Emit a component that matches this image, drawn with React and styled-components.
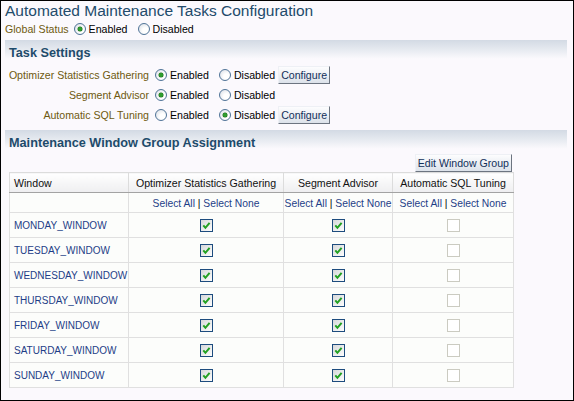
import React from "react";
import styled, { createGlobalStyle } from "styled-components";

const GlobalStyle = createGlobalStyle`
  body {
    margin: 0;
    background: #fff;
    font-family: "Liberation Sans", Arial, sans-serif;
  }
`;

const Frame = styled.div`
  width: 574px;
  height: 401px;
  box-sizing: border-box;
  border: 1px solid #000;
  background: #fbf9fd;
  padding: 0 6px 0 4px;
  font-size: 10.6px;
  color: #000;
  overflow: hidden;
`;

const Title = styled.h1`
  margin: 0;
  font-size: 15.5px;
  font-weight: normal;
  line-height: 19px;
  color: #224b6b;
`;

const StatusRow = styled.div`
  display: flex;
  align-items: center;
  height: 18px;
`;

const Label = styled.span`
  color: #6e5a10;
  white-space: nowrap;
`;

const StatusLabel = styled(Label)`
  margin-right: 5px;
`;

const Option = styled.label`
  display: inline-flex;
  align-items: center;
  gap: 3px;
  white-space: nowrap;
  &:not(:last-of-type) {
    margin-right: 10px;
  }
`;

const RadioDot = styled.span`
  position: relative;
  display: inline-block;
  width: 12px;
  height: 12px;
  box-sizing: border-box;
  border-radius: 50%;
  border: 1px solid #4f7397;
  background: radial-gradient(circle at 65% 65%, #ffffff 30%, #d5dae2 100%);
  &::after {
    content: "";
    display: ${(p) => (p.$on ? "block" : "none")};
    position: absolute;
    left: 3px;
    top: 3px;
    width: 4px;
    height: 4px;
    border-radius: 50%;
    background: #2f9f2f;
    box-shadow: 0 0 0 0.5px #1d6a1d;
  }
`;

const Band = styled.h2`
  margin: ${(p) => p.$top}px 0 0;
  height: 24px;
  box-sizing: border-box;
  padding: 2px 0 0 4px;
  line-height: 22px;
  font-size: 12.7px;
  font-weight: bold;
  color: #1e4b6b;
  background: linear-gradient(#d3dae4 0%, #e6eaf0 40%, #fbf9fd 78%);
`;

const TaskGrid = styled.div`
  display: grid;
  grid-template-columns: 144px auto;
  grid-auto-rows: 20px;
  column-gap: 6px;
  margin-top: 1px;
  align-items: center;
`;

const TaskLabel = styled(Label)`
  text-align: right;
`;

const Options = styled.div`
  display: flex;
  align-items: center;
`;

const Button = styled.button`
  height: 18px;
  margin: 0 0 0 ${(p) => p.$gap || 0}px;
  padding: 0 2px;
  font-family: inherit;
  font-size: 10.6px;
  color: #12305a;
  border: 1px solid;
  border-color: #eef0f5 #6c7480 #6c7480 #eef0f5;
  background: linear-gradient(#fdfdfe, #dce2ea);
  white-space: nowrap;
`;

const ButtonBar = styled.div`
  display: flex;
  justify-content: flex-end;
  width: 503px;
  margin-left: 4px;
  height: 18px;
`;

const Table = styled.table`
  margin-left: 4px;
  width: 504px;
  border-collapse: collapse;
  table-layout: fixed;
  background: #fcfdfb;
`;

const Col = styled.col`
  width: ${(p) => p.$w}px;
`;

const Th = styled.th`
  height: 19px;
  padding: 0 4px;
  font-weight: normal;
  font-size: 10.6px;
  color: #111;
  text-align: ${(p) => p.$align || "center"};
  white-space: nowrap;
  overflow: hidden;
  border-top: 1px solid #dcdcdc;
  border-bottom: 1px solid #a3a3a3;
  border-left: 1px solid ${(p) => (p.$first ? "#dcdcdc" : "#a3a3a3")};
  border-right: 1px solid #dcdcdc;
  background: linear-gradient(#ffffff, #eeeef0);
`;

const Td = styled.td`
  height: ${(p) => p.$h}px;
  padding: 0 ${(p) => (p.$tight ? 0 : 4)}px;
  border: 1px solid #e0e0e0;
  text-align: ${(p) => p.$align || "center"};
  vertical-align: middle;
  white-space: nowrap;
  overflow: visible;
`;

const WindowName = styled.a`
  font-size: 10px;
  color: #1e3d87;
  text-decoration: none;
`;

const SelectLink = styled.a`
  font-size: 10.3px;
  color: #1e3d87;
  text-decoration: none;
`;

const Pipe = styled.span`
  font-size: 10.3px;
  color: #000;
`;

const CheckWrap = styled.span`
  display: inline-flex;
  vertical-align: middle;
`;

const Radio = ({ on, children }) => (
  <Option>
    <RadioDot $on={on} />
    {children}
  </Option>
);

const Checkbox = ({ checked }) => (
  <CheckWrap>
    <svg width="13" height="13" viewBox="0 0 13 13">
      <defs>
        <linearGradient id="cbg" x1="0" y1="0" x2="1" y2="1">
          <stop offset="0" stopColor="#d4d6d8" />
          <stop offset="1" stopColor="#ffffff" />
        </linearGradient>
      </defs>
      {checked ? (
        <>
          <rect x="0.5" y="0.5" width="12" height="12" fill="url(#cbg)" stroke="#1d4c7e" />
          <path d="M3.3 6.4 L5.4 8.8 L9.6 3.8" fill="none" stroke="#22a022" strokeWidth="2" />
        </>
      ) : (
        <rect x="0.5" y="0.5" width="12" height="12" fill="#fff" stroke="#cbcbc1" />
      )}
    </svg>
  </CheckWrap>
);

const SelectPair = () => (
  <>
    <SelectLink href="#">Select All</SelectLink>
    <Pipe> | </Pipe>
    <SelectLink href="#">Select None</SelectLink>
  </>
);

const windows = [
  "MONDAY_WINDOW",
  "TUESDAY_WINDOW",
  "WEDNESDAY_WINDOW",
  "THURSDAY_WINDOW",
  "FRIDAY_WINDOW",
  "SATURDAY_WINDOW",
  "SUNDAY_WINDOW",
];

const tasks = [
  { name: "Optimizer Statistics Gathering", enabled: true, configure: true },
  { name: "Segment Advisor", enabled: true, configure: false },
  { name: "Automatic SQL Tuning", enabled: false, configure: true },
];

export default function App() {
  return (
    <>
      <GlobalStyle />
      <Frame>
        <Title>Automated Maintenance Tasks Configuration</Title>
        <StatusRow>
          <StatusLabel>Global Status</StatusLabel>
          <Radio on>Enabled</Radio>
          <Radio>Disabled</Radio>
        </StatusRow>

        <Band $top={2}>Task Settings</Band>
        <TaskGrid>
          {tasks.map((t) => (
            <React.Fragment key={t.name}>
              <TaskLabel>{t.name}</TaskLabel>
              <Options>
                <Radio on={t.enabled}>Enabled</Radio>
                <Radio on={!t.enabled}>Disabled</Radio>
                {t.configure && <Button $gap={3}>Configure</Button>}
              </Options>
            </React.Fragment>
          ))}
        </TaskGrid>

        <Band $top={5}>Maintenance Window Group Assignment</Band>
        <ButtonBar>
          <Button>Edit Window Group</Button>
        </ButtonBar>
        <Table>
          <colgroup>
            <Col $w={119} />
            <Col $w={155} />
            <Col $w={109} />
            <Col $w={121} />
          </colgroup>
          <thead>
            <tr>
              <Th $align="left" $first>Window</Th>
              <Th>Optimizer Statistics Gathering</Th>
              <Th>Segment Advisor</Th>
              <Th>Automatic SQL Tuning</Th>
            </tr>
          </thead>
          <tbody>
            <tr>
              <Td $h={19} />
              <Td $h={19} $tight><SelectPair /></Td>
              <Td $h={19} $tight><SelectPair /></Td>
              <Td $h={19} $tight><SelectPair /></Td>
            </tr>
            {windows.map((w) => (
              <tr key={w}>
                <Td $h={24} $align="left">
                  <WindowName href="#">{w}</WindowName>
                </Td>
                <Td $h={24}><Checkbox checked /></Td>
                <Td $h={24}><Checkbox checked /></Td>
                <Td $h={24}><Checkbox /></Td>
              </tr>
            ))}
          </tbody>
        </Table>
      </Frame>
    </>
  );
}
